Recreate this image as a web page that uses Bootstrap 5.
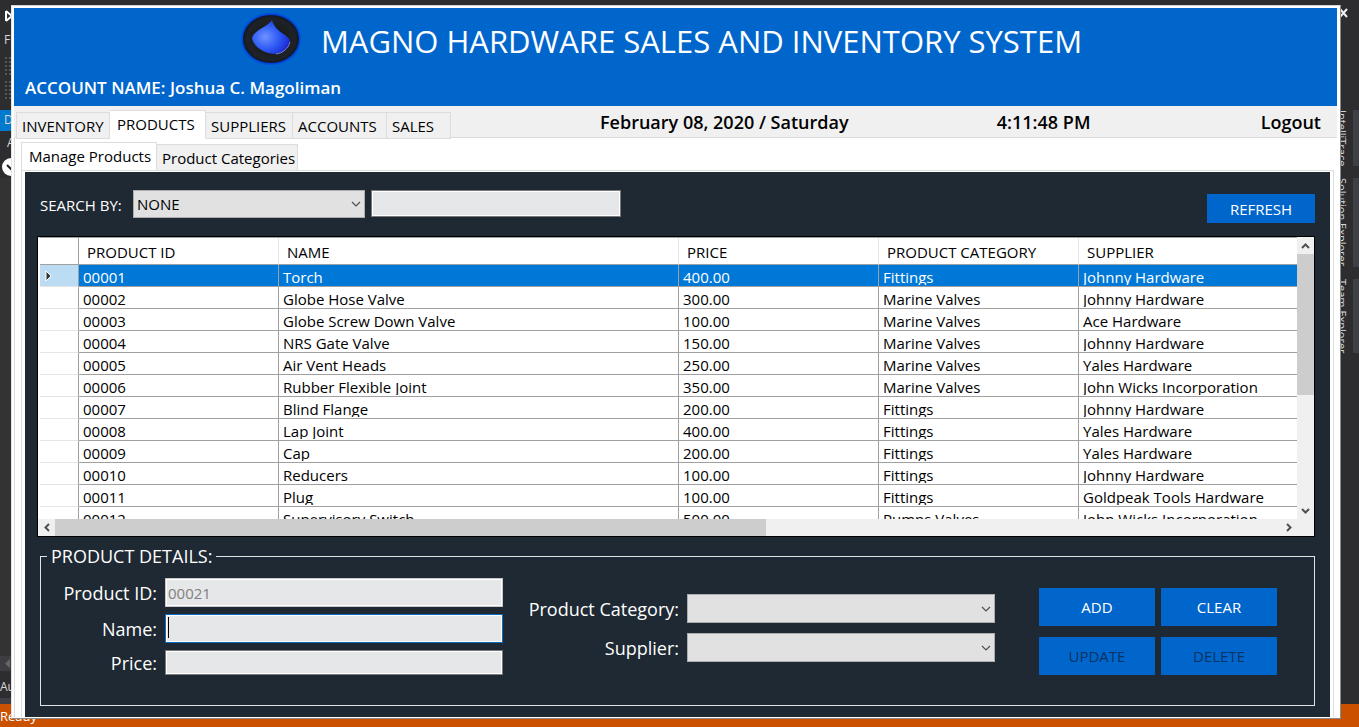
<!DOCTYPE html>
<html lang="en">
<head>
<meta charset="utf-8">
<meta name="viewport" content="width=device-width, initial-scale=1">
<title>Magno Hardware Sales and Inventory System</title>
<link href="https://cdn.jsdelivr.net/npm/bootstrap@5.3.0/dist/css/bootstrap.min.css" rel="stylesheet">
<style>
  :root { --brand: #0066cc; --panel: #1e2933; --line: #dcdcdc; }
  body { font-family: "Open Sans", "Noto Sans", sans-serif; font-size: 15px; line-height: 20px; color: #000; background: #2d2d30; min-height: 100vh; overflow: hidden; }

  /* code editor behind the application window */
  .ide { position: absolute; inset: 0; z-index: 0; color: #d8d8d8; font-size: 12px; line-height: 16px; overflow: hidden; }
  .ide-left { width: 40px; background: #333; }
  .ide-left .ide-tools { height: 110px; background: #2d2d30; }
  .ide-left .ide-doc { height: 21px; background: #007acc; line-height: 20px; }
  .ide-left .ide-nav { height: 47px; background: #2d2d30; }
  .ide-left .ide-scroll { height: 15px; background: #3e3e42; }
  .ide-left .ide-autos { height: 33px; background: #2d2d30; border-bottom: 6px solid #3f3f46; }
  .ide-dots { width: 10px; height: 20px; background: radial-gradient(#55555a 1px, transparent 1px) 0 0 / 4px 4px; }
  .ide-right { width: 24px; gap: 12px; }
  .ide-right svg { margin-bottom: 78px; }
  .ide-side { writing-mode: vertical-rl; border-right: 6px solid #3f3f46; font-size: 11px; line-height: 22px; white-space: nowrap; }
  .ide-status { height: 23px; line-height: 24px; font-size: 13px; background: #ca5100; color: #fff; }

  /* application window */
  .app-window { z-index: 1; height: calc(100vh - 13px); min-height: 620px; margin: 5px 18px 8px 11px; padding: 2px 3px 1px 2px; background: #fff; border: 1px solid; border-color: #d4d4d4 #8a8a8a #8a8a8a #e4e4e4; }
  .app-header { background: var(--brand); color: #fff; height: 98px; flex: none; }
  .app-title { font-size: 31px; line-height: 40px; font-weight: 400; gap: 20px; padding: 5px 28px 0 0; }
  .app-title h1 { font: inherit; margin: 0; padding-top: 8px; }
  .app-account { font-size: 17px; line-height: 20px; font-weight: 600; padding: 13px 11px 0; }
  .app-bar { display: grid; grid-template-columns: 586px 397fr 264fr auto; flex: none; background: #f0f0f0; padding-right: 16px; font-size: 18px; font-weight: 600; height: 32px; border-bottom: 1px solid var(--line); }
  .app-bar > time, .app-bar > a { line-height: 32px; }
  .app-bar a.logout { color: #000; text-decoration: none; }

  .wintabs { border: 0; font-size: 15px; font-weight: 400; padding-left: 2px; align-items: flex-end; flex-wrap: nowrap; }
  .wintabs .nav-link { border: 1px solid var(--line); border-left-width: 0; border-radius: 0; background: #f0f0f0; color: #000; margin: 0; padding: 0 0 0 5px; line-height: 26px; height: 27px; white-space: nowrap; overflow: hidden; }
  .wintabs li:first-child .nav-link { border-left-width: 1px; }
  .wintabs .nav-link.active { background: #fff; color: #000; height: 29px; padding-left: 7px; border-color: var(--line) var(--line) #fff; }
  .app-bar .wintabs { margin-bottom: -1px; }
  .w-inv { width: 94px; } .w-prod { width: 96px; } .w-supp { width: 87px; } .w-acct { width: 94px; } .w-sales { width: 64px; }
  .w-man { width: 136px; } .w-cat { width: 141px; }

  .page-outer { border-left: 1px solid var(--line); padding: 4px 3px 0 6px; min-height: 0; }
  .page-outer .wintabs { padding-left: 0; margin-bottom: -1px; }
  .page-inner { border: 1px solid var(--line); border-bottom: 0; padding: 1px 3px 0; min-height: 0; }
  .panel { background: var(--panel); color: #fff; padding: 18px 15px 11px 12px; min-height: 0; }

  /* fields */
  .field { border-radius: 0; border: 1px solid #7a7a7a; box-shadow: inset 0 0 0 1px #fff; background-color: #e6e7e8; font-size: 15px; line-height: 20px; padding: 0 2px; color: #000; min-height: 0; height: 29px; }
  .field:disabled { background-color: #e6e7e8; color: #808080; border-color: #c8c8c8; }
  .field:focus { background: #e6e7e8 linear-gradient(#000, #000) 2px 2px / 1px 21px no-repeat; caret-color: transparent; border-color: #0a6cc0; box-shadow: inset 0 0 0 1px #fff; }
  .field-low { height: 25px; }
  .combo { border-radius: 0; border: 1px solid #adadad; background-color: #e1e1e1; color: #000; font-size: 15px; line-height: 20px; padding: 0 24px 0 3px; height: 29px; min-height: 0; background-size: 10px 10px; background-position: right 3px center;
    background-image: url("data:image/svg+xml,%3Csvg xmlns='http://www.w3.org/2000/svg' viewBox='0 0 10 10'%3E%3Cpath d='M1 3l4 4 4-4' fill='none' stroke='%23505050' stroke-width='1.2'/%3E%3C/svg%3E"); }
  .cmd { border: 0; border-radius: 0; background: var(--brand); color: #fff; font-size: 15px; line-height: 20px; padding: 0; height: 38px; }
  .cmd:hover { background: #0a74dd; color: #fff; }
  .cmd:disabled { background: var(--brand); color: #0b3263; opacity: 1; }
  .search-row { padding-left: 3px; margin-bottom: 13px; flex: none; }
  .search-row label { padding-top: 5px; width: 93px; }
  .search-row .combo { width: 232px; height: 28px; margin-right: 6px; }
  .search-row .field { width: 250px; height: 27px; }
  .search-row .cmd { width: 108px; height: 29px; margin-top: 4px; }

  /* data grid */
  .datagrid { background: #f0f0f0; border: 1px solid #000; min-height: 0; flex: 1 1 0; }
  .grid-rows { min-height: 0; flex: 1 1 0; }
  .grid-view { background: #fff; border-left: 2px solid #fff; border-top: 1px solid #a0a0a0; min-width: 0; overflow: hidden; }
  .grid-view table { table-layout: fixed; width: 100%; border-collapse: separate; border-spacing: 0; margin: 0; color: #000; }
  .grid-view th, .grid-view td { padding: 0; border: 0; border-right: 1px solid #a0a0a0; border-bottom: 1px solid #a0a0a0; height: 22px; font-weight: 400; }
  .grid-view th:last-child, .grid-view td:last-child { border-right: 0; }
  .grid-view thead th { height: 27px; padding: 1px 0 0 8px; border-right-color: #e5e5e5; vertical-align: middle; }
  .grid-view thead th:first-child { border-right-color: #a0a0a0; }
  .grid-view tbody th { border-bottom-color: #e5e5e5; }
  .grid-view td span { display: block; height: 20px; line-height: 24px; padding-left: 4px; margin-bottom: 1px; overflow: hidden; white-space: nowrap; }
  .grid-view tr.current td { background: #0078d7; color: #fff; }
  .grid-view tr.current th { background: #bcdcf4; }
  .grid-view tr.current svg { display: block; margin-left: 4px; }
  .c-head { width: 39px; } .c-std { width: 200px; } .c-name { width: 400px; }
  .vbar { width: 17px; } .hbar { height: 17px; padding-right: 17px; flex: none; }
  .bar-btn { flex: none; width: 17px; height: 17px; padding: 0; border: 0; background: #f0f0f0; display: flex; align-items: center; justify-content: center; }
  .bar-track { flex: 1; min-width: 0; min-height: 0; }
  .bar-thumb { background: #cdcdcd; }

  /* details */
  .details { flex: none; border: 1px solid #dfe3e6; margin: 9px 0 0 3px; display: grid; grid-template-columns: 462fr 492fr 282fr; padding: 12px 37px 29px 0; align-items: start; min-height: 160px; font-size: 18px; }
  .details legend { float: none; width: auto; font-size: 18px; line-height: 20px; margin: 0 0 0 6px; padding: 0 4px; }
  .group-a, .group-b { display: grid; align-items: center; column-gap: 8px; text-align: right; }
  .group-a { grid-template-columns: 116px 1fr; row-gap: 7px; }
  .group-b { grid-template-columns: 176px 1fr; row-gap: 10px; padding-top: 16px; }
  .group-c { display: grid; grid-template-columns: 1fr 1fr; gap: 11px 6px; padding: 10px 0 0 44px; }
</style>
</head>
<body class="d-flex flex-column">

<div class="ide d-flex flex-column" aria-hidden="true">
  <div class="d-flex flex-grow-1 justify-content-between">
    <div class="ide-left d-flex flex-column">
      <div class="ide-tools">
        <svg class="d-block" width="12" height="24" viewBox="0 0 12 24"><path d="M6 11v10M6 11l6 5-6 5" fill="none" stroke="#fff" stroke-width="2"/></svg>
        <div class="ps-1 pt-2">File</div>
        <div class="ide-dots ms-1 mt-2"></div>
        <div class="ide-dots ms-1 mt-1"></div>
      </div>
      <div class="ide-doc ps-1">D</div>
      <div class="ide-nav">
        <div class="ps-1 pt-1">&nbsp;A</div>
        <svg class="d-block" width="20" height="27" viewBox="0 0 20 27"><circle cx="11" cy="16" r="9" fill="#fff"/><path d="M7 14l4 4 4-4" fill="none" stroke="#222" stroke-width="2"/></svg>
      </div>
      <div class="flex-grow-1"></div>
      <div class="ide-scroll"><svg class="d-block" width="12" height="15" viewBox="0 0 12 15"><path d="M10 3v9L5 7.500z" fill="#66666a"/></svg></div>
      <div class="ide-autos pt-2">Autos</div>
    </div>
    <div class="ide-right d-flex flex-column">
      <svg class="d-block" width="14" height="20" viewBox="0 0 14 20"><path d="M5 9l7 8M12 9l-7 8" stroke="#f1f1f1" stroke-width="2"/></svg>
      <div class="ide-side">IntelliTrace</div>
      <div class="ide-side">Solution Explorer</div>
      <div class="ide-side">Team Explorer</div>
    </div>
  </div>
  <div class="ide-status">Ready</div>
</div>

<main class="app-window position-relative d-flex flex-column">
  <header class="app-header">
    <div class="app-title d-flex justify-content-center">
      <svg width="60" height="52" viewBox="0 0 60 52" role="img" aria-label="Magno logo">
        <defs>
          <radialGradient id="halo"><stop offset=".88" stop-color="#0038e0"/><stop offset="1" stop-color="#0066cc"/></radialGradient>
          <radialGradient id="disc"><stop offset="0" stop-color="#111"/><stop offset=".85" stop-color="#1f2326"/><stop offset="1" stop-color="#10182a"/></radialGradient>
          <radialGradient id="drop" cx=".35" cy=".5" r=".7"><stop offset="0" stop-color="#6f92ff"/><stop offset=".5" stop-color="#2f5cf5"/><stop offset="1" stop-color="#1a20cc"/></radialGradient>
        </defs>
        <ellipse cx="30" cy="26" rx="31" ry="27" fill="url(#halo)"/>
        <ellipse cx="30" cy="26" rx="28" ry="24" fill="url(#disc)"/>
        <path d="M31 7C28 13 13 17 11 25c1 8 12 16 24 16 8 0 14-8 14-14C46 21 34 19 31 7z" fill="url(#drop)"/>
        <path d="M35 41c7-1 12-5 14-12" fill="none" stroke="#7f82b8" stroke-width="1"/>
      </svg>
      <h1>MAGNO HARDWARE SALES AND INVENTORY SYSTEM</h1>
    </div>
    <div class="app-account">ACCOUNT NAME: Joshua C. Magoliman</div>
  </header>

  <div class="app-bar">
    <ul class="nav nav-tabs wintabs">
      <li class="nav-item"><a class="nav-link w-inv" href="#">INVENTORY</a></li>
      <li class="nav-item"><a class="nav-link w-prod active" href="#" aria-current="page">PRODUCTS</a></li>
      <li class="nav-item"><a class="nav-link w-supp" href="#">SUPPLIERS</a></li>
      <li class="nav-item"><a class="nav-link w-acct" href="#">ACCOUNTS</a></li>
      <li class="nav-item"><a class="nav-link w-sales" href="#">SALES</a></li>
    </ul>
    <time datetime="2020-02-08">February 08, 2020 / Saturday</time>
    <time datetime="16:11:48">4:11:48 PM</time>
    <a class="logout" href="#">Logout</a>
  </div>

  <div class="page-outer flex-grow-1 d-flex flex-column">
    <ul class="nav nav-tabs wintabs">
      <li class="nav-item"><a class="nav-link w-man active" href="#" aria-current="page">Manage Products</a></li>
      <li class="nav-item"><a class="nav-link w-cat" href="#">Product Categories</a></li>
    </ul>
    <div class="page-inner flex-grow-1 d-flex flex-column">
      <div class="panel flex-grow-1 d-flex flex-column">

        <form class="search-row d-flex align-items-start">
          <label for="searchBy">SEARCH BY:</label>
          <select id="searchBy" class="form-select combo"><option>NONE</option></select>
          <input id="searchText" type="text" class="form-control field" aria-label="Search text">
          <button type="button" class="btn cmd ms-auto">REFRESH</button>
        </form>

        <div class="datagrid d-flex flex-column">
          <div class="grid-rows d-flex">
            <div class="grid-view flex-grow-1">
              <table>
                <colgroup><col class="c-head"><col class="c-std"><col class="c-name"><col class="c-std"><col class="c-std"><col></colgroup>
                <thead>
                  <tr><th></th><th scope="col">PRODUCT ID</th><th scope="col">NAME</th><th scope="col">PRICE</th><th scope="col">PRODUCT CATEGORY</th><th scope="col">SUPPLIER</th></tr>
                </thead>
                <tbody>
                  <tr class="current"><th><svg width="9" height="14" viewBox="0 0 9 14"><path d="M2 2l5 5-5 5z" fill="#333" stroke="#fff" stroke-width="1"/></svg></th><td><span>00001</span></td><td><span>Torch</span></td><td><span>400.00</span></td><td><span>Fittings</span></td><td><span>Johnny Hardware</span></td></tr>
                  <tr><th></th><td><span>00002</span></td><td><span>Globe Hose Valve</span></td><td><span>300.00</span></td><td><span>Marine Valves</span></td><td><span>Johnny Hardware</span></td></tr>
                  <tr><th></th><td><span>00003</span></td><td><span>Globe Screw Down Valve</span></td><td><span>100.00</span></td><td><span>Marine Valves</span></td><td><span>Ace Hardware</span></td></tr>
                  <tr><th></th><td><span>00004</span></td><td><span>NRS Gate Valve</span></td><td><span>150.00</span></td><td><span>Marine Valves</span></td><td><span>Johnny Hardware</span></td></tr>
                  <tr><th></th><td><span>00005</span></td><td><span>Air Vent Heads</span></td><td><span>250.00</span></td><td><span>Marine Valves</span></td><td><span>Yales Hardware</span></td></tr>
                  <tr><th></th><td><span>00006</span></td><td><span>Rubber Flexible Joint</span></td><td><span>350.00</span></td><td><span>Marine Valves</span></td><td><span>John Wicks Incorporation</span></td></tr>
                  <tr><th></th><td><span>00007</span></td><td><span>Blind Flange</span></td><td><span>200.00</span></td><td><span>Fittings</span></td><td><span>Johnny Hardware</span></td></tr>
                  <tr><th></th><td><span>00008</span></td><td><span>Lap Joint</span></td><td><span>400.00</span></td><td><span>Fittings</span></td><td><span>Yales Hardware</span></td></tr>
                  <tr><th></th><td><span>00009</span></td><td><span>Cap</span></td><td><span>200.00</span></td><td><span>Fittings</span></td><td><span>Yales Hardware</span></td></tr>
                  <tr><th></th><td><span>00010</span></td><td><span>Reducers</span></td><td><span>100.00</span></td><td><span>Fittings</span></td><td><span>Johnny Hardware</span></td></tr>
                  <tr><th></th><td><span>00011</span></td><td><span>Plug</span></td><td><span>100.00</span></td><td><span>Fittings</span></td><td><span>Goldpeak Tools Hardware</span></td></tr>
                  <tr><th></th><td><span>00012</span></td><td><span>Supervisory Switch</span></td><td><span>500.00</span></td><td><span>Pumps Valves</span></td><td><span>John Wicks Incorporation</span></td></tr>
                </tbody>
              </table>
            </div>
            <div class="vbar d-flex flex-column">
              <button type="button" class="bar-btn" aria-label="Scroll up"><svg width="9" height="6" viewBox="0 0 9 6"><path d="M1 5l3.500-3.500L8 5" fill="none" stroke="#505050" stroke-width="2"/></svg></button>
              <div class="bar-track"><div class="bar-thumb" style="height:57%"></div></div>
              <button type="button" class="bar-btn" aria-label="Scroll down"><svg width="9" height="6" viewBox="0 0 9 6"><path d="M1 1l3.500 3.500L8 1" fill="none" stroke="#505050" stroke-width="2"/></svg></button>
            </div>
          </div>
          <div class="hbar d-flex">
            <button type="button" class="bar-btn" aria-label="Scroll left"><svg width="6" height="9" viewBox="0 0 6 9"><path d="M5 1L1.500 4.500 5 8" fill="none" stroke="#505050" stroke-width="2"/></svg></button>
            <div class="bar-track d-flex"><div class="bar-thumb" style="width:58%"></div></div>
            <button type="button" class="bar-btn" aria-label="Scroll right"><svg width="6" height="9" viewBox="0 0 6 9"><path d="M1 1l3.500 3.500L1 8" fill="none" stroke="#505050" stroke-width="2"/></svg></button>
          </div>
        </div>

        <fieldset class="details">
          <legend>PRODUCT DETAILS:</legend>
          <div class="group-a">
            <label for="prodId">Product ID:</label>
            <input id="prodId" type="text" class="form-control field" value="00021" disabled>
            <label for="prodName">Name:</label>
            <input id="prodName" type="text" class="form-control field" autofocus>
            <label for="prodPrice">Price:</label>
            <input id="prodPrice" type="text" class="form-control field field-low">
          </div>
          <div class="group-b">
            <label for="prodCat">Product Category:</label>
            <select id="prodCat" class="form-select combo"><option></option></select>
            <label for="prodSupp">Supplier:</label>
            <select id="prodSupp" class="form-select combo"><option></option></select>
          </div>
          <div class="group-c">
            <button type="button" class="btn cmd">ADD</button>
            <button type="button" class="btn cmd">CLEAR</button>
            <button type="button" class="btn cmd" disabled>UPDATE</button>
            <button type="button" class="btn cmd" disabled>DELETE</button>
          </div>
        </fieldset>

      </div>
    </div>
  </div>
</main>

<script src="https://cdn.jsdelivr.net/npm/bootstrap@5.3.0/dist/js/bootstrap.bundle.min.js"></script>
</body>
</html>
